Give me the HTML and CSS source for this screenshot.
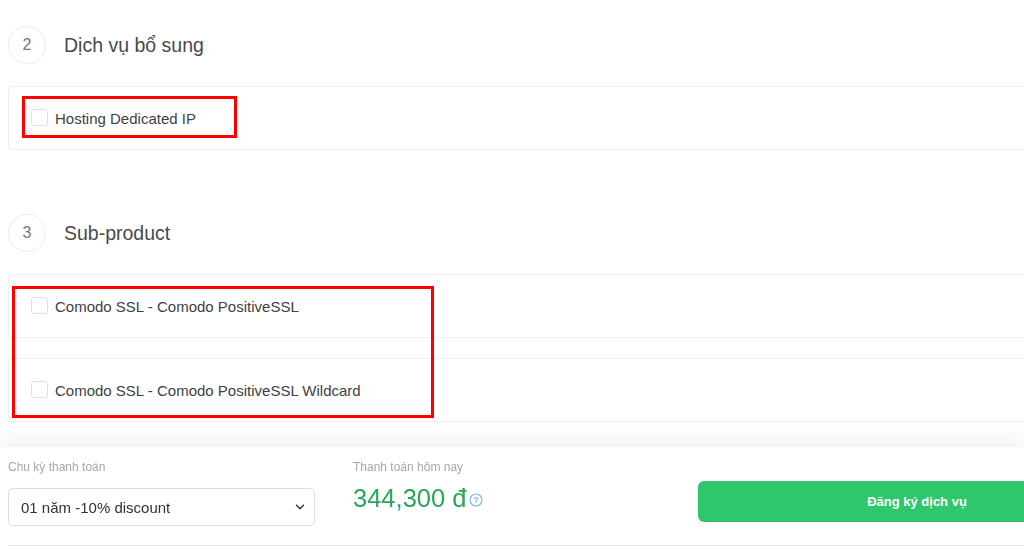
FILE: index.html
```html
<!DOCTYPE html>
<html lang="vi">
<head>
<meta charset="utf-8">
<title>Đăng ký dịch vụ</title>
<link rel="stylesheet" href="styles.css">
</head>
<body>
<main class="page">
  <section class="step">
    <div class="step-head">
      <span class="step-num">2</span>
      <h2 class="step-title">Dịch vụ bổ sung</h2>
    </div>
    <div class="list">
      <label class="card"><span class="check"></span><span class="card-text">Hosting Dedicated IP</span></label>
      <div class="mark mark-one"></div>
    </div>
  </section>

  <section class="step step-second">
    <div class="step-head">
      <span class="step-num">3</span>
      <h2 class="step-title">Sub-product</h2>
    </div>
    <div class="list">
      <label class="card"><span class="check"></span><span class="card-text">Comodo SSL - Comodo PositiveSSL</span></label>
      <label class="card"><span class="check"></span><span class="card-text">Comodo SSL - Comodo PositiveSSL Wildcard</span></label>
      <div class="mark mark-two"></div>
    </div>
  </section>
</main>

<footer class="bar">
  <div class="bar-inner">
    <div class="col col-cycle">
      <div class="label">Chu kỳ thanh toán</div>
      <div class="select">
        <span>01 năm -10% discount</span>
        <svg class="chev" width="10" height="6" viewBox="0 0 10 6"><path d="M1.5 1.2 L5 4.6 L8.5 1.2" fill="none" stroke="#444" stroke-width="1.6" stroke-linecap="round" stroke-linejoin="round"/></svg>
      </div>
    </div>
    <div class="col col-pay">
      <div class="label">Thanh toán hôm nay</div>
      <div class="price">344,300 đ<svg class="help" width="14" height="14" viewBox="0 0 14 14"><circle cx="7" cy="7" r="6" fill="none" stroke="#7cb8ec" stroke-width="1.2"/><text x="7" y="10.2" text-anchor="middle" font-family="Liberation Sans, Arial, sans-serif" font-size="8.5" font-weight="bold" fill="#7cb8ec">?</text></svg></div>
    </div>
    <div class="col col-btn">
      <button class="btn">Đăng ký dịch vụ</button>
    </div>
  </div>
</footer>
</body>
</html>
```

FILE: styles.css
```css
html, body {
  margin: 0;
  padding: 0;
  background: #fff;
  overflow: hidden;
  height: 549px;
}

body {
  font-family: "Liberation Sans", Arial, sans-serif;
  color: #444;
}

.page {
  width: 1128px;
  padding: 26px 0 0 8px;
}

.step-head {
  display: flex;
  align-items: center;
  height: 38px;
  gap: 18px;
}

.step-num {
  width: 36px;
  height: 36px;
  border: 1px solid #ececec;
  border-radius: 50%;
  display: flex;
  align-items: center;
  justify-content: center;
  font-size: 16px;
  color: #777;
}

.step-title {
  margin: 0;
  font-size: 19.5px;
  font-weight: normal;
  color: #4a4a4a;
}

.step-second {
  margin-top: 64px;
}

.list {
  position: relative;
  margin-top: 22px;
  display: flex;
  flex-direction: column;
  gap: 20px;
}

.card {
  box-sizing: border-box;
  height: 64px;
  border: 1px solid #eeeeee;
  border-radius: 4px;
  display: flex;
  align-items: center;
  padding-left: 22px;
  gap: 7px;
}

.check {
  box-sizing: border-box;
  width: 17px;
  height: 17px;
  border: 1px solid #dcdfe6;
  border-radius: 3px;
  background: #fff;
  margin-top: -1px;
}

.card-text {
  font-size: 15px;
  color: #3f3f3f;
}

.mark {
  position: absolute;
  border: 3px solid #ff0000;
  box-sizing: border-box;
}

.mark-one {
  left: 14px;
  top: 10px;
  width: 215px;
  height: 42px;
}

.mark-two {
  left: 4px;
  top: 12px;
  width: 422px;
  height: 132px;
}

.bar {
  position: fixed;
  left: 0;
  right: 0;
  bottom: 0;
  height: 102px;
  background: #fff;
  box-shadow: 0 -6px 22px rgba(0, 0, 0, 0.07);
}

.bar-inner {
  box-sizing: border-box;
  width: 1136px;
  margin-left: 8px;
  height: 99px;
  border-bottom: 1px solid #e6e6e6;
  display: grid;
  grid-template-columns: 345px 345px 438px;
  padding-top: 13px;
}

.label {
  font-size: 12px;
  color: #a3a6b4;
  line-height: 14px;
}

.select {
  box-sizing: border-box;
  margin-top: 14px;
  width: 307px;
  height: 38px;
  border: 1px solid #dedede;
  border-radius: 5px;
  display: flex;
  align-items: center;
  justify-content: space-between;
  padding: 0 9px 0 12px;
  font-size: 15px;
  color: #333;
}

.price {
  margin-top: 9px;
  font-size: 25.5px;
  color: #2aa65a;
  display: flex;
  align-items: center;
  gap: 3px;
  line-height: 30px;
}

.help {
  margin-top: 3px;
}

.col-btn {
  padding-top: 21px;
}

.btn {
  width: 438px;
  height: 41px;
  border: none;
  border-radius: 6px;
  background: #2ec76c;
  color: #fff;
  font-family: "Liberation Sans", Arial, sans-serif;
  font-size: 13px;
  font-weight: bold;
}
```
